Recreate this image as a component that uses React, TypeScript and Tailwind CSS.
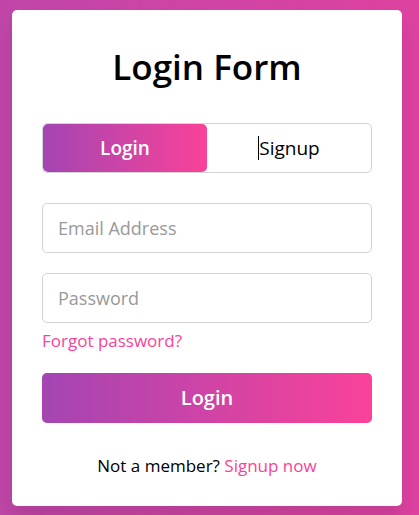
import React from 'react';

const font = { fontFamily: '"Open Sans", "Noto Sans", sans-serif' };

export default function App() {
  return (
    <div
      className="min-h-[515px] w-[419px] overflow-hidden bg-[linear-gradient(to_right,#bf46a8,#de42a0)] pt-[10px]"
      style={font}
    >
      <div className="mx-[12px] w-[390px] rounded-[5px] bg-white px-[30px] pt-[30px] pb-[27px] shadow-[0_15px_20px_rgba(0,0,0,0.1)]">
        {/* Title */}
        <h1 className="text-center text-[35px] leading-[53px] font-semibold text-black">
          Login Form
        </h1>

        {/* Login / Signup toggle */}
        <div className="mt-[30px] flex h-[50px] overflow-hidden rounded-[5px] border border-[#d3d3d3]">
          <div className="flex w-1/2 items-center justify-center rounded-[5px] bg-[linear-gradient(to_right,#a445b2,#fa4299)] text-[19px] font-semibold text-white">
            Login
          </div>
          <div className="flex w-1/2 items-center justify-center text-[19px] text-black">
            <span className="inline-block h-[24px] w-px bg-black" />
            Signup
          </div>
        </div>

        {/* Fields */}
        <div className="mt-[30px] flex h-[50px] items-center rounded-[5px] border border-[#d3d3d3] pl-[15px] text-[18px] text-[#999]">
          Email Address
        </div>
        <div className="mt-[20px] flex h-[50px] items-center rounded-[5px] border border-[#d3d3d3] pl-[15px] text-[18px] text-[#999]">
          Password
        </div>
        <div className="mt-[5px] text-[17px] leading-[25px] text-[#fa4299]">Forgot password?</div>

        <div className="mt-[20px] flex h-[50px] items-center justify-center rounded-[5px] bg-[linear-gradient(to_right,#a445b2,#fa4299)] text-[20px] font-semibold text-white">
          Login
        </div>

        <div className="mt-[30px] text-center text-[17px] leading-[26px] text-black">
          Not a member? <span className="text-[#fa4299]">Signup now</span>
        </div>
      </div>
    </div>
  );
}
